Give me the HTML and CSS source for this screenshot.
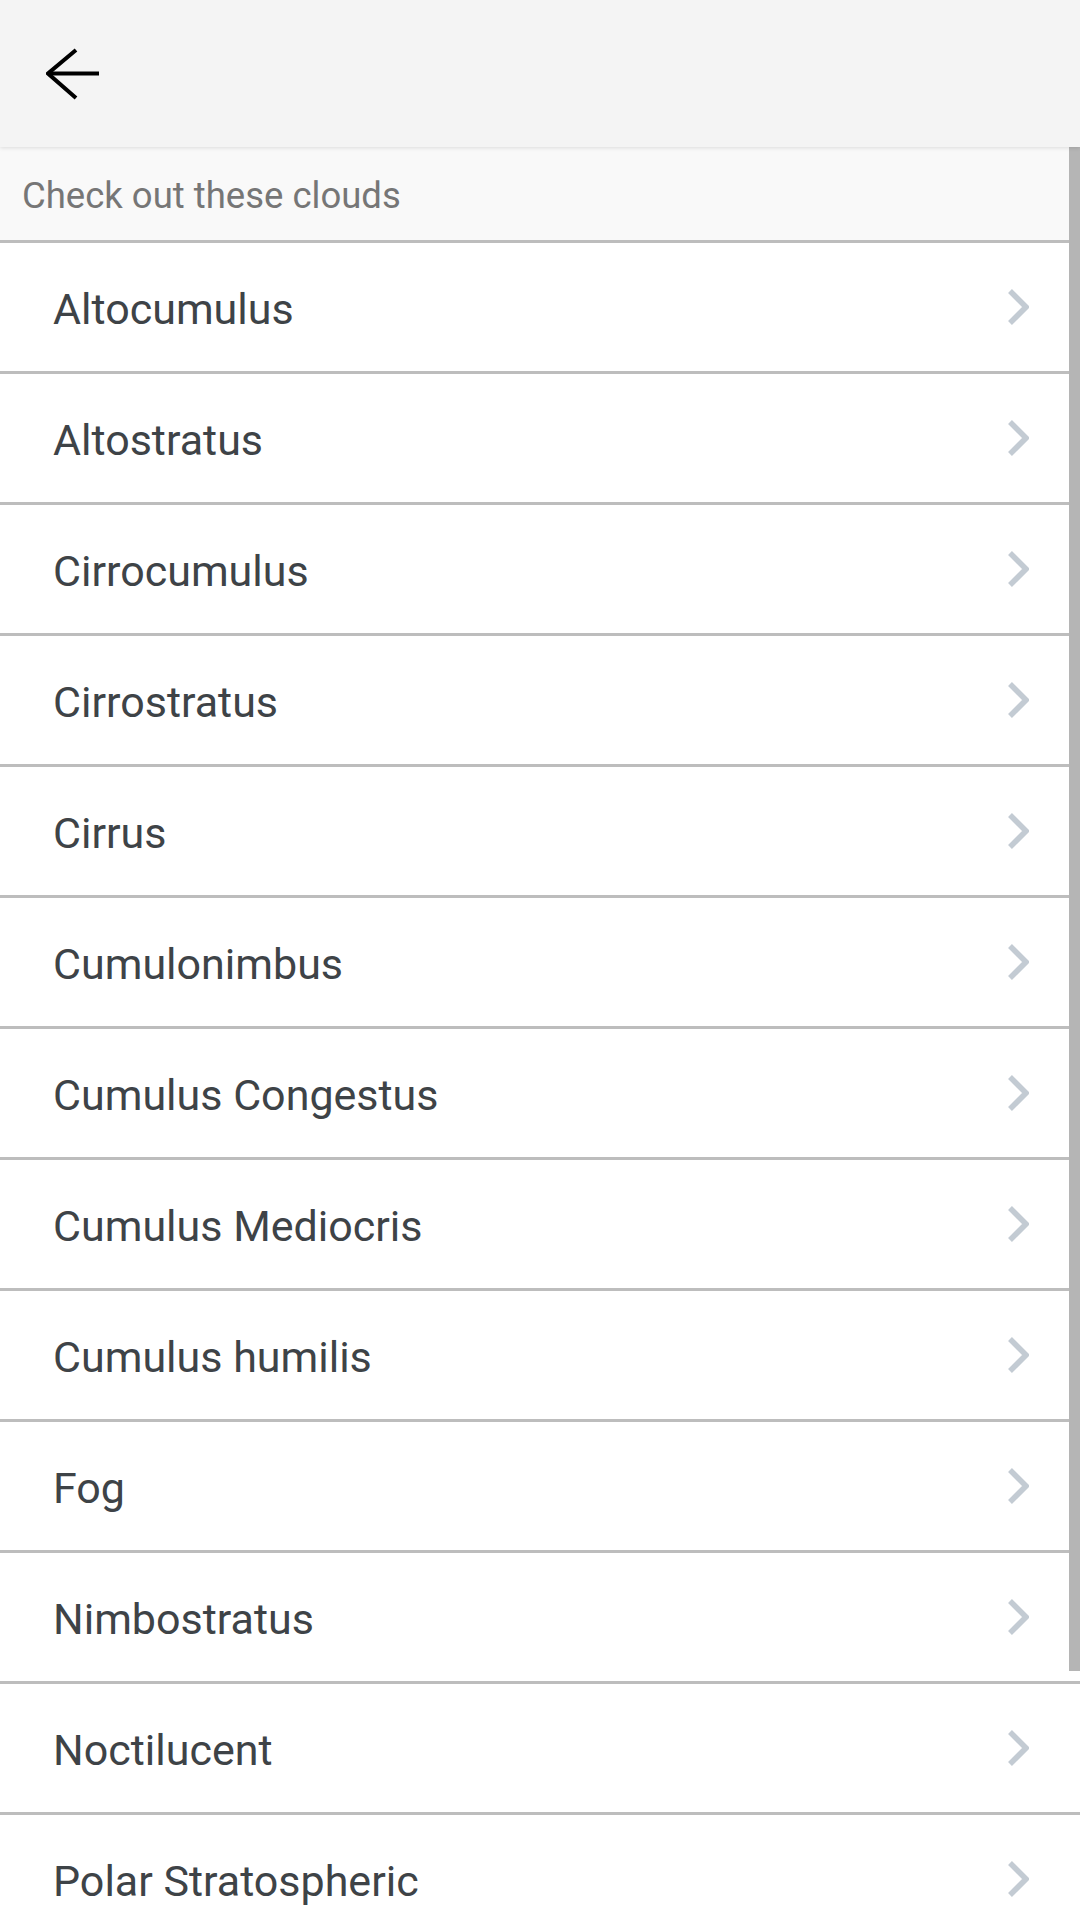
FILE: index.html
```html
<!DOCTYPE html>
<html>
<head>
<meta charset="utf-8">
<link rel="stylesheet" href="styles.css">
</head>
<body>
<div class="screen">
  <header class="appbar">
    <svg class="back" width="56" height="52" viewBox="0 0 56 52">
      <polyline points="30,2 2,25.5 30,50" fill="none" stroke="#000" stroke-width="4"/>
      <line x1="3" y1="25.5" x2="53" y2="25.5" stroke="#000" stroke-width="4"/>
    </svg>
  </header>
  <div class="content">
    <div class="subheader">Check out these clouds</div>
    <ul class="list">
      <li class="row"><span>Altocumulus</span><svg class="chev" width="22" height="36" viewBox="0 0 22 36"><polyline points="3,2 19,18 3,34" fill="none" stroke="#c3cbd3" stroke-width="5.5"/></svg></li>
      <li class="row"><span>Altostratus</span><svg class="chev" width="22" height="36" viewBox="0 0 22 36"><polyline points="3,2 19,18 3,34" fill="none" stroke="#c3cbd3" stroke-width="5.5"/></svg></li>
      <li class="row"><span>Cirrocumulus</span><svg class="chev" width="22" height="36" viewBox="0 0 22 36"><polyline points="3,2 19,18 3,34" fill="none" stroke="#c3cbd3" stroke-width="5.5"/></svg></li>
      <li class="row"><span>Cirrostratus</span><svg class="chev" width="22" height="36" viewBox="0 0 22 36"><polyline points="3,2 19,18 3,34" fill="none" stroke="#c3cbd3" stroke-width="5.5"/></svg></li>
      <li class="row"><span>Cirrus</span><svg class="chev" width="22" height="36" viewBox="0 0 22 36"><polyline points="3,2 19,18 3,34" fill="none" stroke="#c3cbd3" stroke-width="5.5"/></svg></li>
      <li class="row"><span>Cumulonimbus</span><svg class="chev" width="22" height="36" viewBox="0 0 22 36"><polyline points="3,2 19,18 3,34" fill="none" stroke="#c3cbd3" stroke-width="5.5"/></svg></li>
      <li class="row"><span>Cumulus Congestus</span><svg class="chev" width="22" height="36" viewBox="0 0 22 36"><polyline points="3,2 19,18 3,34" fill="none" stroke="#c3cbd3" stroke-width="5.5"/></svg></li>
      <li class="row"><span>Cumulus Mediocris</span><svg class="chev" width="22" height="36" viewBox="0 0 22 36"><polyline points="3,2 19,18 3,34" fill="none" stroke="#c3cbd3" stroke-width="5.5"/></svg></li>
      <li class="row"><span>Cumulus humilis</span><svg class="chev" width="22" height="36" viewBox="0 0 22 36"><polyline points="3,2 19,18 3,34" fill="none" stroke="#c3cbd3" stroke-width="5.5"/></svg></li>
      <li class="row"><span>Fog</span><svg class="chev" width="22" height="36" viewBox="0 0 22 36"><polyline points="3,2 19,18 3,34" fill="none" stroke="#c3cbd3" stroke-width="5.5"/></svg></li>
      <li class="row"><span>Nimbostratus</span><svg class="chev" width="22" height="36" viewBox="0 0 22 36"><polyline points="3,2 19,18 3,34" fill="none" stroke="#c3cbd3" stroke-width="5.5"/></svg></li>
      <li class="row"><span>Noctilucent</span><svg class="chev" width="22" height="36" viewBox="0 0 22 36"><polyline points="3,2 19,18 3,34" fill="none" stroke="#c3cbd3" stroke-width="5.5"/></svg></li>
      <li class="row"><span>Polar Stratospheric</span><svg class="chev" width="22" height="36" viewBox="0 0 22 36"><polyline points="3,2 19,18 3,34" fill="none" stroke="#c3cbd3" stroke-width="5.5"/></svg></li>
    </ul>
    <div class="scrollbar"></div>
  </div>
</div>
</body>
</html>
```
FILE: styles.css
```css
html, body {
  margin: 0;
  padding: 0;
  background: #ffffff;
}
.screen {
  width: 1080px;
  height: 1920px;
  overflow: hidden;
  display: flex;
  flex-direction: column;
  font-family: Roboto, "Noto Sans", sans-serif;
}
.appbar {
  height: 147px;
  flex: 0 0 147px;
  background: #f4f4f4;
  display: flex;
  align-items: center;
  padding-left: 46px;
  box-sizing: border-box;
  box-shadow: 0 1px 4px rgba(0,0,0,0.12);
  position: relative;
  z-index: 2;
}
.back {
  display: block;
}
.content {
  position: relative;
  flex: 1;
}
.subheader {
  height: 93px;
  box-sizing: border-box;
  padding-top: 3px;
  background: #f9f9f9;
  border-bottom: 3px solid #bdbdbd;
  display: flex;
  align-items: center;
  padding-left: 22px;
  font-size: 36.5px;
  color: #767676;
}
.subheader {
  height: 96px;
}
.list {
  list-style: none;
  margin: 0;
  padding: 0;
}
.row {
  height: 128px;
  box-sizing: content-box;
  border-bottom: 3px solid #bdbdbd;
  display: flex;
  align-items: center;
  justify-content: space-between;
  padding-left: 53px;
  padding-right: 51px;
  font-size: 43px;
  color: #3e4347;
}
.row span {
  padding-top: 3px;
}
.chev {
  display: block;
}
.scrollbar {
  position: absolute;
  top: 0;
  right: 0;
  width: 11px;
  height: 1524px;
  background: #b5b5b5;
}
```
